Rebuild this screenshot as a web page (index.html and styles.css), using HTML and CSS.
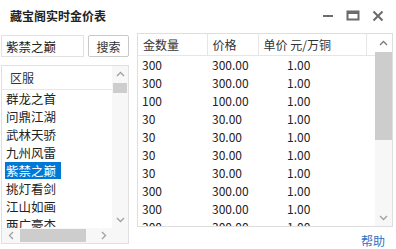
FILE: index.html
```html
<!DOCTYPE html>
<html lang="zh-CN">
<head>
    <meta charset="UTF-8">
    <title>藏宝阁实时金价表</title>
    <link rel="stylesheet" href="styles.css">
</head>
<body>
    <div class="window">
        <div class="titlebar">
            <span class="title">藏宝阁实时金价表</span>
            <div class="controls">
                <svg class="ctl" width="12" height="12" viewBox="0 0 12 12"><rect x="1" y="5" width="10" height="2" fill="#6b6b6b"/></svg>
                <svg class="ctl" width="14" height="12" viewBox="0 0 14 12"><rect x="1.5" y="1.5" width="11" height="8" fill="none" stroke="#6b6b6b" stroke-width="2"/><rect x="1" y="1" width="12" height="3" fill="#6b6b6b"/></svg>
                <svg class="ctl" width="12" height="12" viewBox="0 0 12 12"><path d="M1.5 1.5 L10.5 10.5 M10.5 1.5 L1.5 10.5" stroke="#6b6b6b" stroke-width="2"/></svg>
            </div>
        </div>

        <div class="main">
            <div class="left">
                <div class="search">
                    <input class="search-input" type="text" value="紫禁之巅">
                    <button class="search-btn">搜索</button>
                </div>

                <div class="list">
                    <div class="list-body">
                        <div class="list-head">区服</div>
                        <div class="list-item">群龙之首</div>
                        <div class="list-item">问鼎江湖</div>
                        <div class="list-item">武林天骄</div>
                        <div class="list-item">九州风雷</div>
                        <div class="list-item"><span class="selected">紫禁之巅</span></div>
                        <div class="list-item">挑灯看剑</div>
                        <div class="list-item">江山如画</div>
                        <div class="list-item">两广豪杰</div>
                    </div>
                    <div class="vscroll list-vs">
                        <div class="sb-btn"><svg width="9" height="6" viewBox="0 0 9 6"><path d="M1 5 L4.5 1.5 L8 5" fill="none" stroke="#a0a0a0" stroke-width="1.3"/></svg></div>
                        <div class="sb-track"><div class="sb-thumb list-thumb"></div></div>
                        <div class="sb-btn"><svg width="9" height="6" viewBox="0 0 9 6"><path d="M1 1 L4.5 4.5 L8 1" fill="none" stroke="#a0a0a0" stroke-width="1.3"/></svg></div>
                    </div>
                    <div class="hscroll">
                        <div class="sb-btn"><svg width="6" height="9" viewBox="0 0 6 9"><path d="M5 1 L1.5 4.5 L5 8" fill="none" stroke="#a0a0a0" stroke-width="1.3"/></svg></div>
                        <div class="sb-track"><div class="sb-thumb h-thumb"></div></div>
                        <div class="sb-btn"><svg width="6" height="9" viewBox="0 0 6 9"><path d="M1 1 L4.5 4.5 L1 8" fill="none" stroke="#a0a0a0" stroke-width="1.3"/></svg></div>
                    </div>
                    <div class="corner"></div>
                </div>
            </div>

            <div class="right">
                <div class="grid">
                    <div class="grid-body">
                        <table class="prices">
                            <colgroup>
                                <col style="width: 69px">
                                <col style="width: 51px">
                                <col style="width: 108px">
                                <col>
                            </colgroup>
                            <thead>
                                <tr>
                                    <th>金数量</th>
                                    <th>价格</th>
                                    <th>单价 元/万铜</th>
                                    <th class="filler"></th>
                                </tr>
                            </thead>
                            <tbody>
                                <tr><td>300</td><td>300.00</td><td class="unit">1.00</td><td></td></tr>
                                <tr><td>300</td><td>300.00</td><td class="unit">1.00</td><td></td></tr>
                                <tr><td>100</td><td>100.00</td><td class="unit">1.00</td><td></td></tr>
                                <tr><td>30</td><td>30.00</td><td class="unit">1.00</td><td></td></tr>
                                <tr><td>30</td><td>30.00</td><td class="unit">1.00</td><td></td></tr>
                                <tr><td>30</td><td>30.00</td><td class="unit">1.00</td><td></td></tr>
                                <tr><td>30</td><td>30.00</td><td class="unit">1.00</td><td></td></tr>
                                <tr><td>300</td><td>300.00</td><td class="unit">1.00</td><td></td></tr>
                                <tr><td>300</td><td>300.00</td><td class="unit">1.00</td><td></td></tr>
                                <tr><td>300</td><td>300.00</td><td class="unit">1.00</td><td></td></tr>
                            </tbody>
                        </table>
                    </div>
                    <div class="vscroll grid-vs">
                        <div class="sb-btn up"><svg width="9" height="6" viewBox="0 0 9 6"><path d="M1 5 L4.5 1.5 L8 5" fill="none" stroke="#7a7a7a" stroke-width="1.3"/></svg></div>
                        <div class="sb-track"><div class="sb-thumb grid-thumb"></div></div>
                        <div class="sb-btn"><svg width="9" height="6" viewBox="0 0 9 6"><path d="M1 1 L4.5 4.5 L8 1" fill="none" stroke="#a0a0a0" stroke-width="1.3"/></svg></div>
                    </div>
                </div>
                <div class="help"><a href="#">帮助</a></div>
            </div>
        </div>
    </div>
</body>
</html>
```

FILE: styles.css
```css
body {
    margin: 0;
    font-family: "Noto Sans CJK SC", "Noto Sans", sans-serif;
    font-size: 12px;
    color: #222;
    background-color: #fff;
}
.window {
    width: 396px;
    height: 249px;
    display: flex;
    flex-direction: column;
    overflow: hidden;
}
.titlebar {
    height: 31px;
    display: flex;
    align-items: center;
    justify-content: space-between;
    padding-left: 10px;
    padding-right: 12px;
}
.title {
    font-weight: bold;
    line-height: 16px;
}
.controls {
    display: flex;
    align-items: center;
    gap: 12px;
}
.ctl {
    display: block;
}
.main {
    display: flex;
    padding-left: 1px;
    gap: 8px;
}
.left {
    width: 128px;
    display: flex;
    flex-direction: column;
}
.search {
    display: flex;
    gap: 4px;
    margin-top: 4px;
    height: 22px;
}
.search-input {
    width: 83px;
    box-sizing: border-box;
    border: 1px solid #e2e2e2;
    padding: 0 0 0 4px;
    font: inherit;
    font-size: 12.5px;
    color: #222;
    outline: none;
}
.search-btn {
    width: 41px;
    border: 1px solid #c9c9c9;
    border-radius: 2px;
    background-color: #fff;
    font: inherit;
    color: #333;
    padding: 0;
}
.list {
    margin-top: 8px;
    height: 179px;
    box-sizing: border-box;
    border: 1px solid #e0e0e0;
    display: grid;
    grid-template-columns: 1fr 16px;
    grid-template-rows: 1fr 15px;
    overflow: hidden;
}
.list-body {
    overflow: hidden;
}
.list-head {
    height: 23px;
    line-height: 23px;
    padding-left: 8px;
    border-bottom: 1px solid #e8e8e8;
    color: #333;
}
.list-item {
    height: 18px;
    line-height: 18px;
    padding-left: 4px;
    font-size: 12.5px;
    white-space: nowrap;
}
.selected {
    display: inline-block;
    vertical-align: top;
    height: 17px;
    line-height: 17px;
    margin-left: -1px;
    padding: 0 5px 0 1px;
    background-color: #0078d7;
    color: #fff;
}
.vscroll {
    display: flex;
    flex-direction: column;
    background-color: #f4f4f4;
}
.sb-btn {
    display: flex;
    align-items: center;
    justify-content: center;
    flex: none;
}
.vscroll .sb-btn {
    height: 16px;
}
.sb-track {
    flex: 1;
}
.sb-thumb {
    background-color: #cdcdcd;
}
.list-vs {
    background-color: #f7f7f7;
}
.list-thumb {
    margin: 1px 1px 0;
    height: 10px;
}
.hscroll {
    display: flex;
    background-color: #f7f7f7;
}
.hscroll .sb-btn {
    width: 17px;
}
.hscroll .sb-track {
    display: flex;
    align-items: stretch;
    padding: 1px 0;
}
.h-thumb {
    margin-left: 1px;
    width: 66px;
}
.corner {
    background-color: #f7f7f7;
}
.right {
    width: 256px;
    display: flex;
    flex-direction: column;
}
.grid {
    margin-top: 2px;
    height: 194px;
    box-sizing: border-box;
    border: 1px solid #dedede;
    display: flex;
    overflow: hidden;
}
.grid-body {
    flex: 1;
    overflow: hidden;
}
.prices {
    width: 100%;
    table-layout: fixed;
    border-collapse: collapse;
}
.prices th {
    height: 21px;
    padding: 0 0 0 5px;
    text-align: left;
    font-weight: normal;
    color: #333;
    border-right: 1px solid #e6e6e6;
    border-bottom: 1px solid #e6e6e6;
    white-space: nowrap;
}
.prices th.filler {
    border-right: none;
}
.prices td {
    height: 18px;
    padding: 0 0 0 4px;
    line-height: 18px;
    white-space: nowrap;
}
.prices td:nth-child(2) {
    padding-left: 5px;
}
.prices td.unit {
    padding-left: 29px;
}
.grid-vs {
    width: 17px;
    background-color: #f7f7f7;
}
.grid-vs .sb-btn.up {
    height: 18px;
    background-color: #fff;
}
.grid-thumb {
    height: 88px;
}
.help {
    text-align: right;
    padding: 6px 8px 0 0;
    line-height: 16px;
}
.help a {
    color: #2a72c5;
    text-decoration: none;
}
```
